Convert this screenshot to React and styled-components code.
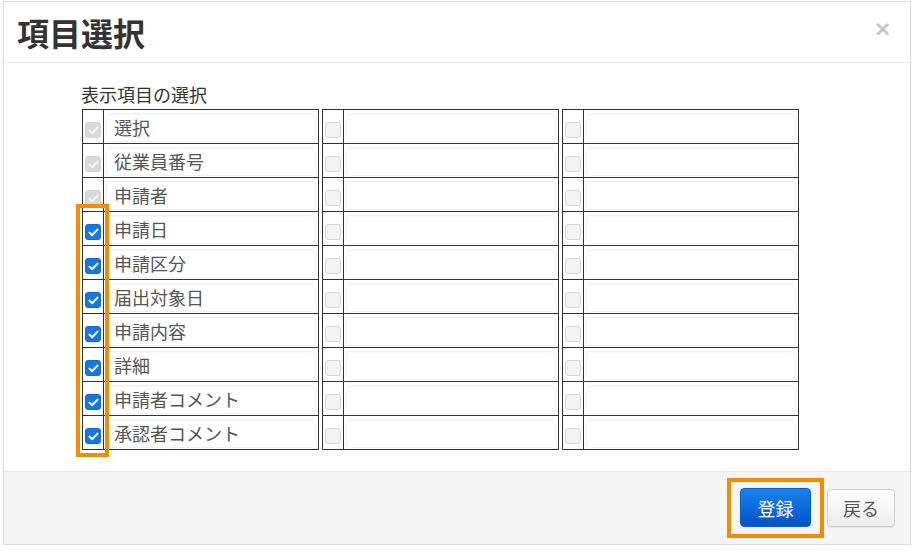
import React from "react";
import styled, { createGlobalStyle } from "styled-components";

const Global = createGlobalStyle`
  html, body { margin: 0; padding: 0; background: #fff; }
  body { font-family: "Noto Sans CJK JP", "Noto Sans", sans-serif; }
`;

const Modal = styled.div`
  margin: 1px 0 0 3px;
  width: 906px;
  height: 542px;
  border: 1px solid #dcdcdc;
  display: flex;
  flex-direction: column;
  background: #fff;
`;

const Header = styled.div`
  height: 60px;
  flex: none;
  border-bottom: 1px solid #e8e8e8;
  display: flex;
  align-items: center;
  justify-content: space-between;
  padding: 0 18px 0 13px;
`;

const Title = styled.h1`
  margin: 0;
  font-size: 32px;
  font-weight: 700;
  color: #333;
  line-height: 1;
`;

const Close = styled.span`
  font-family: "DejaVu Sans", sans-serif;
  font-size: 22px;
  font-weight: 700;
  color: #c4c4c4;
  line-height: 1;
  margin-top: -6px;
`;

const Body = styled.div`
  position: relative;
  flex: 1;
  padding: 17px 0 0 78px;
`;

const Label = styled.div`
  font-size: 18px;
  color: #333;
  line-height: 29px;
  height: 29px;
  margin-left: -1px;
`;

const Columns = styled.div`
  display: flex;
  gap: 3px;
`;

const Table = styled.table`
  width: 237px;
  border-collapse: collapse;
  border: 1px solid #333;
  table-layout: fixed;
`;

const Row = styled.tr`
  height: 34px;
`;

const CheckCell = styled.td`
  width: 20px;
  padding: 0 0 5px 0;
  border: 1px solid #333;
  vertical-align: bottom;
  text-align: center;
  line-height: 0;
`;

const TextCell = styled.td`
  padding: 2px 2px 1px 2px;
  border: 1px solid #333;
  line-height: 0;
`;

const Field = styled.div`
  box-sizing: border-box;
  height: 29px;
  border: 1px solid #f0f0f0;
  border-radius: 5px;
  box-shadow: inset 0 1px 1px rgba(0, 0, 0, 0.03);
  display: flex;
  align-items: center;
  padding-left: 7px;
  font-size: 18px;
  line-height: 1;
  color: #555;
  white-space: nowrap;
`;

const Box = styled.span`
  display: inline-flex;
  align-items: center;
  justify-content: center;
  box-sizing: border-box;
  width: 16px;
  height: 16px;
  border-radius: 3px;
  background: ${(p) =>
    p.$state === "on" ? "#1577e6" : p.$state === "disabled" ? "#dadada" : "#f3f3f3"};
  border: 1px solid
    ${(p) => (p.$state === "on" ? "#0f6bd6" : p.$state === "disabled" ? "#d2d2d2" : "#d6d6d6")};
`;

const Highlight = styled.div`
  position: absolute;
  left: 72px;
  top: 141px;
  width: 25px;
  height: 245px;
  border: 4px solid #f28c00;
  pointer-events: none;
`;

const Footer = styled.div`
  height: 72px;
  flex: none;
  background: #f5f5f5;
  border-top: 1px solid #e6e6e6;
  display: flex;
  align-items: center;
  justify-content: flex-end;
  gap: 3px;
  padding-right: 15px;
`;

const Frame = styled.div`
  border: 4px solid #f28c00;
  padding: 6px 9px 7px 9px;
  display: flex;
`;

const Button = styled.button`
  font-family: "Noto Sans CJK JP", sans-serif;
  font-size: 18px;
  border-radius: 4px;
  cursor: pointer;
  padding: 0;
  display: flex;
  align-items: center;
  justify-content: center;
  width: ${(p) => (p.$primary ? "71px" : "68px")};
  height: ${(p) => (p.$primary ? "39px" : "38px")};
  color: ${(p) => (p.$primary ? "#fff" : "#555")};
  background: ${(p) =>
    p.$primary
      ? "linear-gradient(#1a82ec, #0052c9)"
      : "linear-gradient(#ffffff, #ececec)"};
  border: 1px solid ${(p) => (p.$primary ? "#0a5fd0" : "#cfcfcf")};
  box-shadow: ${(p) => (p.$primary ? "none" : "0 1px 1px rgba(0,0,0,0.08)")};
`;

const Check = ({ color }) => (
  <svg width="11" height="9" viewBox="0 0 11 9">
    <path d="M1.5 4.6 L4.2 7.2 L9.5 1.6" fill="none" stroke={color} strokeWidth="2" strokeLinecap="round" strokeLinejoin="round" />
  </svg>
);

const Checkbox = ({ state }) => (
  <Box $state={state}>
    {state === "on" && <Check color="#fff" />}
    {state === "disabled" && <Check color="#f4f4f4" />}
  </Box>
);

const items = [
  ["選択", "disabled"],
  ["従業員番号", "disabled"],
  ["申請者", "disabled"],
  ["申請日", "on"],
  ["申請区分", "on"],
  ["届出対象日", "on"],
  ["申請内容", "on"],
  ["詳細", "on"],
  ["申請者コメント", "on"],
  ["承認者コメント", "on"],
];

const empty = items.map(() => ["", "off"]);

const Column = ({ rows }) => (
  <Table>
    <tbody>
      {rows.map(([text, state], i) => (
        <Row key={i}>
          <CheckCell>
            <Checkbox state={state} />
          </CheckCell>
          <TextCell>
            <Field>{text}</Field>
          </TextCell>
        </Row>
      ))}
    </tbody>
  </Table>
);

export default function App() {
  return (
    <>
      <Global />
      <Modal>
        <Header>
          <Title>項目選択</Title>
          <Close>×</Close>
        </Header>
        <Body>
          <Label>表示項目の選択</Label>
          <Columns>
            <Column rows={items} />
            <Column rows={empty} />
            <Column rows={empty} />
          </Columns>
          <Highlight />
        </Body>
        <Footer>
          <Frame>
            <Button $primary>登録</Button>
          </Frame>
          <Button>戻る</Button>
        </Footer>
      </Modal>
    </>
  );
}
